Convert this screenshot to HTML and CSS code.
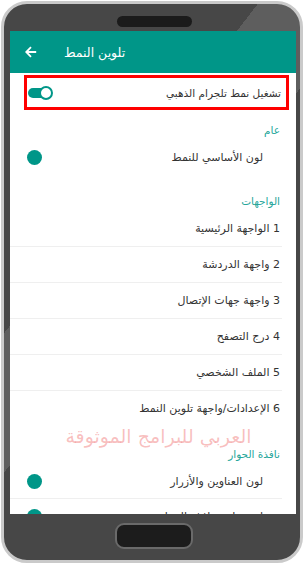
FILE: index.html
```html
<!DOCTYPE html>
<html lang="ar">
<head>
<meta charset="utf-8">
<link rel="stylesheet" href="styles.css">
</head>
<body>
<div class="phone">
  <div class="top-bezel"><div class="speaker"></div></div>
  <div class="screen">
    <header class="appbar">
      <svg class="back" width="12" height="12" viewBox="0 0 12 12"><path d="M11.2 6H1.2M6 1.2L1.2 6L6 10.8"/></svg>
      <span class="title">تلوين النمط</span>
    </header>
    <div class="content" dir="rtl">
      <div class="switch-row">
        <span class="label">تشغيل نمط تلجرام الذهبي</span>
        <span class="toggle"><span class="thumb"></span></span>
      </div>

      <div class="section">عام</div>
      <div class="color-row group-end">
        <span class="label">لون الأساسي للنمط</span>
        <span class="dot"></span>
      </div>

      <div class="section">الواجهات</div>
      <div class="item">1 الواجهة الرئيسية</div>
      <div class="item">2 واجهة الدردشة</div>
      <div class="item">3 واجهة جهات الإتصال</div>
      <div class="item">4 درج التصفح</div>
      <div class="item">5 الملف الشخصي</div>
      <div class="item last group-end2">6 الإعدادات/واجهة تلوين النمط</div>

      <div class="section">نافذة الحوار</div>
      <div class="color-row divided">
        <span class="label">لون العناوين والأزرار</span>
        <span class="dot"></span>
      </div>
      <div class="color-row">
        <span class="label">لون خلفية نافذة الحوار</span>
        <span class="dot"></span>
      </div>
    </div>
    <div class="watermark">العربي للبرامج الموثوقة</div>
  </div>
  <div class="bottom-bezel"><div class="home"></div></div>
</div>
</body>
</html>
```

FILE: styles.css
```css
* {
  box-sizing: border-box;
  margin: 0;
  padding: 0;
}

html, body {
  background: #fff;
}

body {
  width: 305px;
  height: 565px;
  overflow: hidden;
  font-family: "DejaVu Sans", sans-serif;
}

.phone {
  margin: 1px 0 0 1px;
  width: 302px;
  height: 562px;
  border: 3px solid #cacaca;
  border-radius: 26px;
  background: linear-gradient(127.6deg, #474747 201px, #5e5e5e 201px, #5e5e5e 286px, #474747 286px);
  padding: 0 4px 0 6px;
  display: flex;
  flex-direction: column;
}

.top-bezel {
  height: 27px;
  flex: none;
}

.speaker {
  width: 75px;
  height: 11px;
  margin: 12px 0 0 107px;
  border-radius: 6px;
  background: #1b1b1b;
}

.screen {
  position: relative;
  height: 483px;
  flex: none;
  background: #fff;
  overflow: hidden;
}

.appbar {
  height: 42px;
  background: #009688;
  display: flex;
  align-items: center;
  padding-left: 15px;
}

.back {
  fill: none;
  stroke: #fff;
  stroke-width: 1.8;
}

.title {
  margin-left: 27px;
  color: #fff;
  font-size: 12.5px;
}

.content {
  font-size: 11px;
  color: #333;
}

.switch-row {
  margin: 2px 7px 0 14px;
  height: 35px;
  border: 3px solid #ff0000;
  padding: 0 5px 0 1px;
  display: flex;
  align-items: center;
  justify-content: space-between;
}

.switch-row .label {
  font-size: 10.5px;
}

.toggle {
  position: relative;
  width: 25px;
  height: 14px;
}

.toggle::before {
  content: "";
  position: absolute;
  left: 0;
  top: 2px;
  width: 20px;
  height: 10px;
  border-radius: 5px;
  background: #009688;
}

.thumb {
  position: absolute;
  right: 0;
  top: 0;
  width: 14px;
  height: 14px;
  border-radius: 50%;
  background: #fff;
  border: 2px solid #009688;
}

.section {
  height: 30px;
  padding: 12px 16px 2px;
  line-height: 16px;
  font-size: 10.5px;
  color: #26a69a;
}

.color-row {
  height: 34px;
  margin-right: 14px;
  padding: 0 19px 0 17px;
  display: flex;
  align-items: center;
  justify-content: space-between;
}

.color-row.divided {
  height: 35px;
  border-bottom: 1px solid #efefef;
}

.group-end {
  margin-bottom: 7px;
}

.dot {
  width: 15px;
  height: 15px;
  border-radius: 50%;
  background: #009688;
}

.item {
  height: 36px;
  margin-right: 14px;
  padding-right: 2px;
  border-bottom: 1px solid #efefef;
  display: flex;
  align-items: center;
}

.item.last {
  height: 35px;
  border-bottom: none;
}

.group-end2 {
  margin-bottom: 8px;
}

.watermark {
  position: absolute;
  left: 0;
  right: 0;
  top: 393px;
  padding-left: 11px;
  text-align: center;
  font-size: 19px;
  line-height: 24px;
  color: rgba(235, 70, 70, 0.35);
  direction: rtl;
}

.bottom-bezel {
  height: 46px;
  flex: none;
}

.home {
  width: 78px;
  height: 26px;
  margin: 9px 0 0 105px;
  border-radius: 9px;
  background: #1c1c1c;
  border: 2px solid #6a6a6a;
}
```
